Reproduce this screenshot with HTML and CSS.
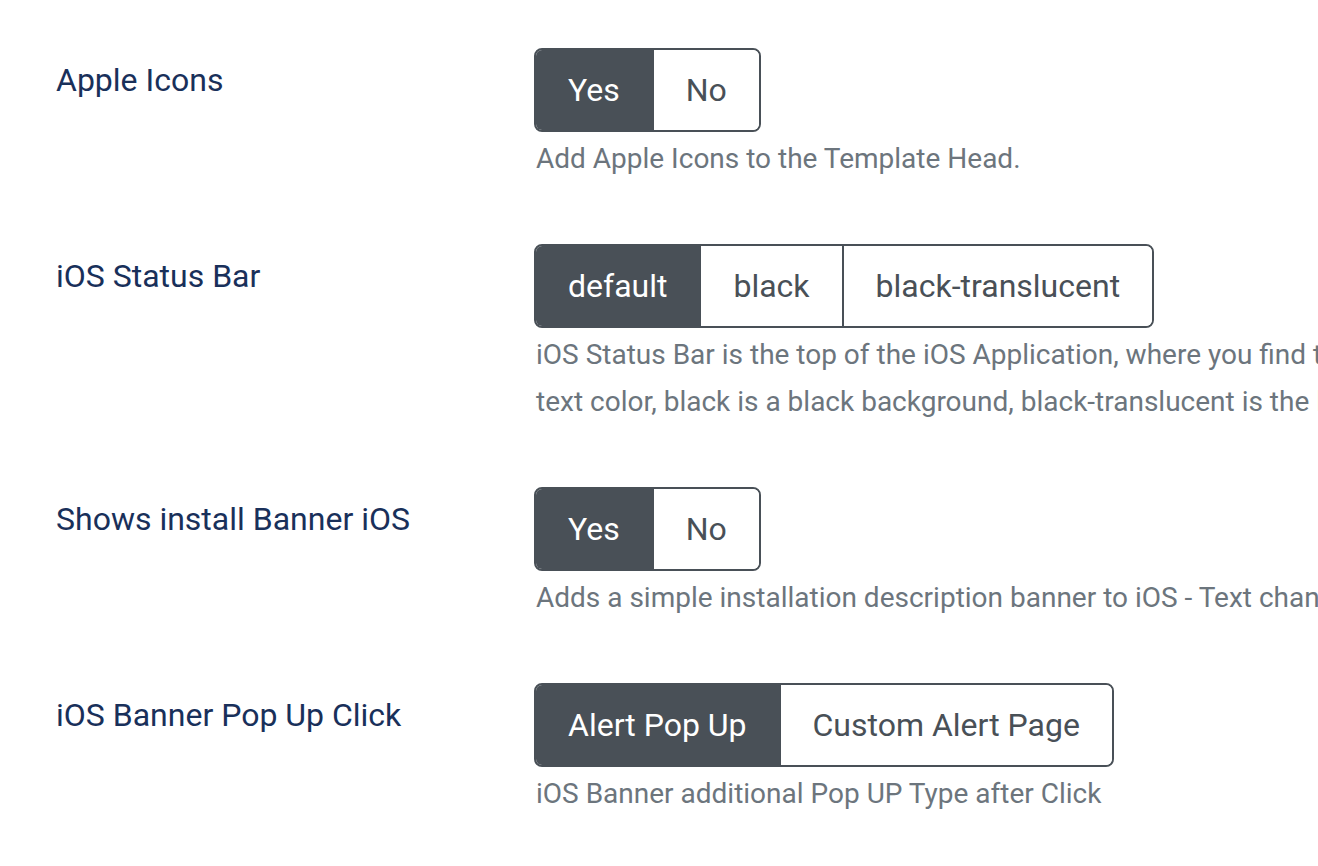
FILE: index.html
```html
<!DOCTYPE html>
<html lang="en">
<head>
    <meta charset="UTF-8">
    <meta name="viewport" content="width=device-width, initial-scale=1.0">
    <title>Template Options</title>
    <link rel="stylesheet" href="styles.css">
</head>
<body>
    <div class="options">
        <div class="field">
            <div class="label">Apple Icons</div>
            <div class="control">
                <div class="switcher">
                    <span class="opt active">Yes</span>
                    <span class="opt">No</span>
                </div>
                <div class="desc">Add Apple Icons to the Template Head.</div>
            </div>
        </div>
        <div class="field">
            <div class="label">iOS Status Bar</div>
            <div class="control">
                <div class="switcher">
                    <span class="opt active">default</span>
                    <span class="opt">black</span>
                    <span class="opt">black-translucent</span>
                </div>
                <div class="desc">iOS Status Bar is the top of the iOS Application, where you find the time and battery status. default is a white background with black<br>text color, black is a black background, black-translucent is the light transparent background.</div>
            </div>
        </div>
        <div class="field">
            <div class="label">Shows install Banner iOS</div>
            <div class="control">
                <div class="switcher">
                    <span class="opt active">Yes</span>
                    <span class="opt">No</span>
                </div>
                <div class="desc">Adds a simple installation description banner to iOS - Text changes in the language file.</div>
            </div>
        </div>
        <div class="field">
            <div class="label">iOS Banner Pop Up Click</div>
            <div class="control">
                <div class="switcher">
                    <span class="opt active">Alert Pop Up</span>
                    <span class="opt">Custom Alert Page</span>
                </div>
                <div class="desc">iOS Banner additional Pop UP Type after Click</div>
            </div>
        </div>
    </div>
</body>
</html>
```

FILE: styles.css
```css
html, body {
    margin: 0;
    padding: 0;
    background-color: #ffffff;
    overflow: hidden;
}
body {
    font-family: Roboto, "Liberation Sans", sans-serif;
}
.options {
    padding: 48px 0 0 56px;
}
.field {
    display: grid;
    grid-template-columns: 478px 1fr;
    margin-bottom: 62px;
}
.label {
    padding-top: 8px;
    font-size: 32px;
    line-height: 48px;
    color: #19305a;
}
.switcher {
    display: inline-flex;
    border: 2px solid #495057;
    border-radius: 8px;
    overflow: hidden;
}
.opt {
    padding: 0 32px;
    height: 80px;
    line-height: 80px;
    font-size: 32px;
    color: #495057;
    background-color: #ffffff;
}
.opt + .opt {
    border-left: 2px solid #495057;
}
.opt.active {
    background-color: #495057;
    color: #ffffff;
}
.desc {
    margin-top: 3px;
    font-size: 28px;
    line-height: 47px;
    color: #6c757d;
    white-space: nowrap;
    padding-left: 2px;
}
```
